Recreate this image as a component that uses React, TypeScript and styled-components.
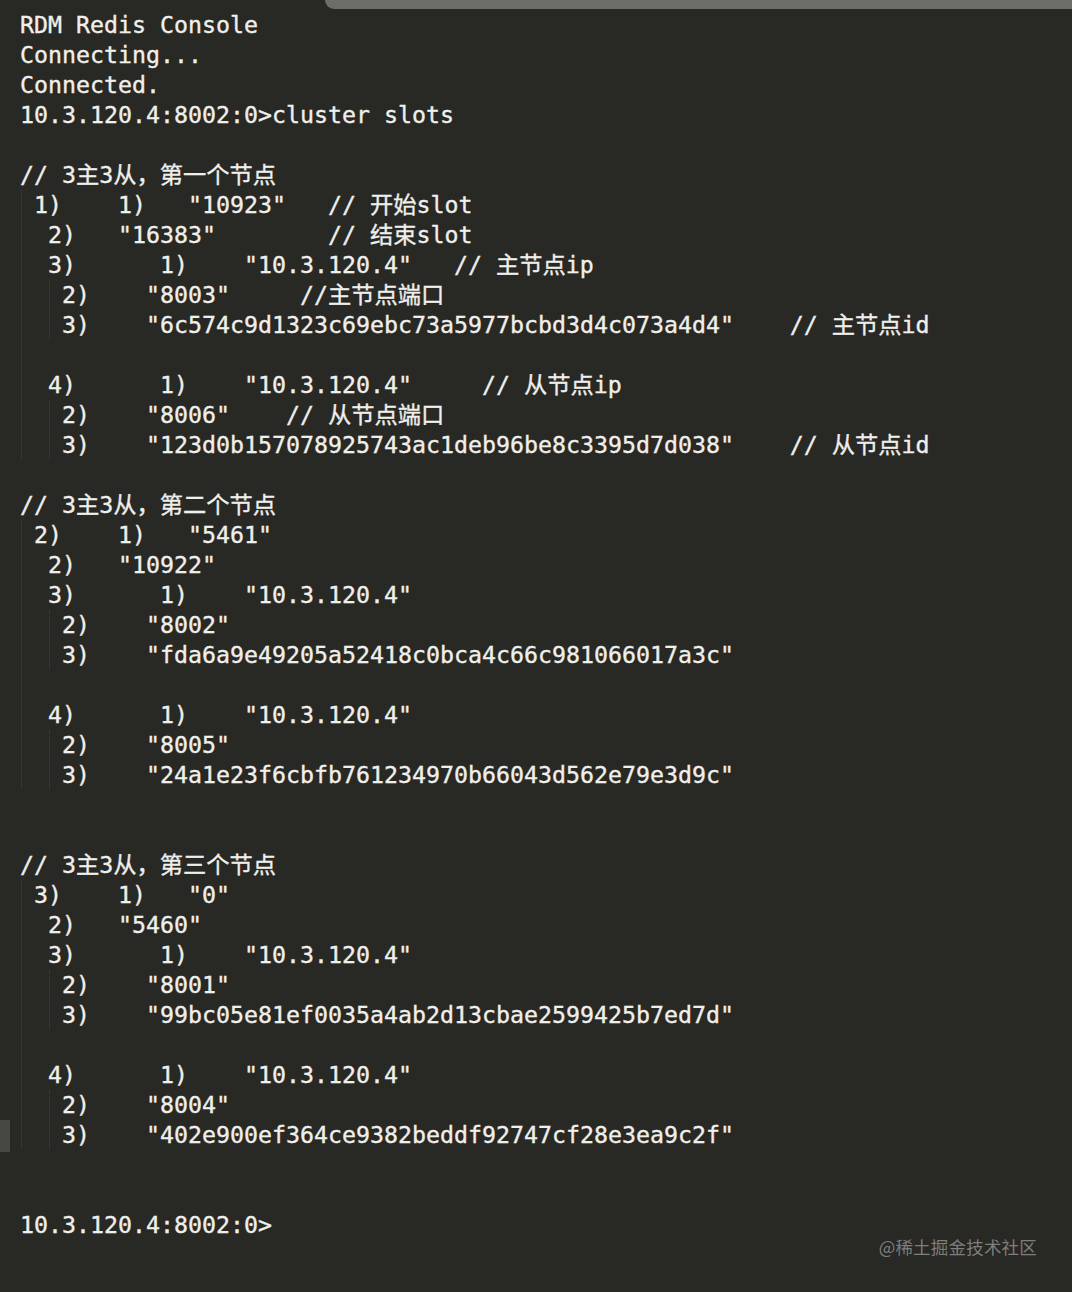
import React from "react";
import styled, { createGlobalStyle } from "styled-components";

const Global = createGlobalStyle`
  html, body {
    margin: 0;
    padding: 0;
    background: #282824;
  }
  #root { min-height: 1292px; }
`;

const Page = styled.div`
  position: relative;
  width: 1072px;
  height: 1292px;
  background: #282824;
  overflow: hidden;
`;

const TopStrip = styled.div`
  height: 9px;
  margin-left: 325px;
  background: #6d6e69;
  border-bottom-left-radius: 10px;
`;

const Console = styled.div`
  padding: 1px 0 0 20px;
  font-family: "DejaVu Sans Mono", "Noto Sans CJK SC", monospace;
  font-size: 23.25px;
  line-height: 30px;
  color: #efefec;
  -webkit-text-stroke: 0.35px #efefec;
`;

const Line = styled.div`
  height: 30px;
  white-space: pre;
`;

const Group = styled.div<{ $guide: number }>`
  background-image: linear-gradient(to bottom, #42423d 50%, transparent 50%);
  background-size: 1px 2px;
  background-repeat: repeat-y;
  background-position: ${(p) => p.$guide}px 0;
`;

const SideMark = styled.div`
  position: absolute;
  left: 0;
  top: 1120px;
  width: 10px;
  height: 32px;
  background: #474743;
`;

const Watermark = styled.div`
  position: absolute;
  right: 35px;
  top: 1234px;
  font-family: "Noto Sans CJK SC", "Noto Sans", sans-serif;
  font-size: 17.5px;
  line-height: 26px;
  color: #7e7e7b;
  letter-spacing: 0.2px;
`;

type Seg = [number, string];

const pad = (segs: Seg[]) => {
  let s = "";
  for (const [col, text] of segs) {
    while (s.length < col) s += " ";
    s += text;
  }
  return s;
};

const Row = ({ segs }: { segs: Seg[] }) => <Line>{pad(segs)}</Line>;
const Blank = () => <Line> </Line>;

type NodeInfo = {
  idx: string;
  start: string;
  end: string;
  masterPort: string;
  masterId: string;
  slavePort: string;
  slaveId: string;
  notes?: boolean;
};

const IP = '"10.3.120.4"';

const note = (on: boolean | undefined, col: number, text: string): Seg[] =>
  on ? [[col, text]] : [];

const NodeBlock = ({ n }: { n: NodeInfo }) => (
  <Group $guide={1}>
    <Row segs={[[1, n.idx], [7, "1)"], [12, `"${n.start}"`], ...note(n.notes, 22, "// 开始slot")]} />
    <Row segs={[[2, "2)"], [7, `"${n.end}"`], ...note(n.notes, 22, "// 结束slot")]} />
    <Row segs={[[2, "3)"], [10, "1)"], [16, IP], ...note(n.notes, 31, "// 主节点ip")]} />
    <Group $guide={29}>
      <Row segs={[[3, "2)"], [9, `"${n.masterPort}"`], ...note(n.notes, 20, "//主节点端口")]} />
      <Row segs={[[3, "3)"], [9, `"${n.masterId}"`], ...note(n.notes, 55, "// 主节点id")]} />
    </Group>
    <Blank />
    <Row segs={[[2, "4)"], [10, "1)"], [16, IP], ...note(n.notes, 33, "// 从节点ip")]} />
    <Group $guide={29}>
      <Row segs={[[3, "2)"], [9, `"${n.slavePort}"`], ...note(n.notes, 19, "// 从节点端口")]} />
      <Row segs={[[3, "3)"], [9, `"${n.slaveId}"`], ...note(n.notes, 55, "// 从节点id")]} />
    </Group>
  </Group>
);

const nodes: NodeInfo[] = [
  {
    idx: "1)",
    start: "10923",
    end: "16383",
    masterPort: "8003",
    masterId: "6c574c9d1323c69ebc73a5977bcbd3d4c073a4d4",
    slavePort: "8006",
    slaveId: "123d0b157078925743ac1deb96be8c3395d7d038",
    notes: true,
  },
  {
    idx: "2)",
    start: "5461",
    end: "10922",
    masterPort: "8002",
    masterId: "fda6a9e49205a52418c0bca4c66c981066017a3c",
    slavePort: "8005",
    slaveId: "24a1e23f6cbfb761234970b66043d562e79e3d9c",
  },
  {
    idx: "3)",
    start: "0",
    end: "5460",
    masterPort: "8001",
    masterId: "99bc05e81ef0035a4ab2d13cbae2599425b7ed7d",
    slavePort: "8004",
    slaveId: "402e900ef364ce9382beddf92747cf28e3ea9c2f",
  },
];

export default function App() {
  return (
    <Page>
      <Global />
      <TopStrip />
      <Console>
        <Line>RDM Redis Console</Line>
        <Line>Connecting...</Line>
        <Line>Connected.</Line>
        <Line>10.3.120.4:8002:0&gt;cluster slots</Line>
        <Blank />
        <Line>// 3主3从，第一个节点</Line>
        <NodeBlock n={nodes[0]} />
        <Blank />
        <Line>// 3主3从，第二个节点</Line>
        <NodeBlock n={nodes[1]} />
        <Blank />
        <Blank />
        <Line>// 3主3从，第三个节点</Line>
        <NodeBlock n={nodes[2]} />
        <Blank />
        <Blank />
        <Line>10.3.120.4:8002:0&gt;</Line>
      </Console>
      <SideMark />
      <Watermark>@稀土掘金技术社区</Watermark>
    </Page>
  );
}
